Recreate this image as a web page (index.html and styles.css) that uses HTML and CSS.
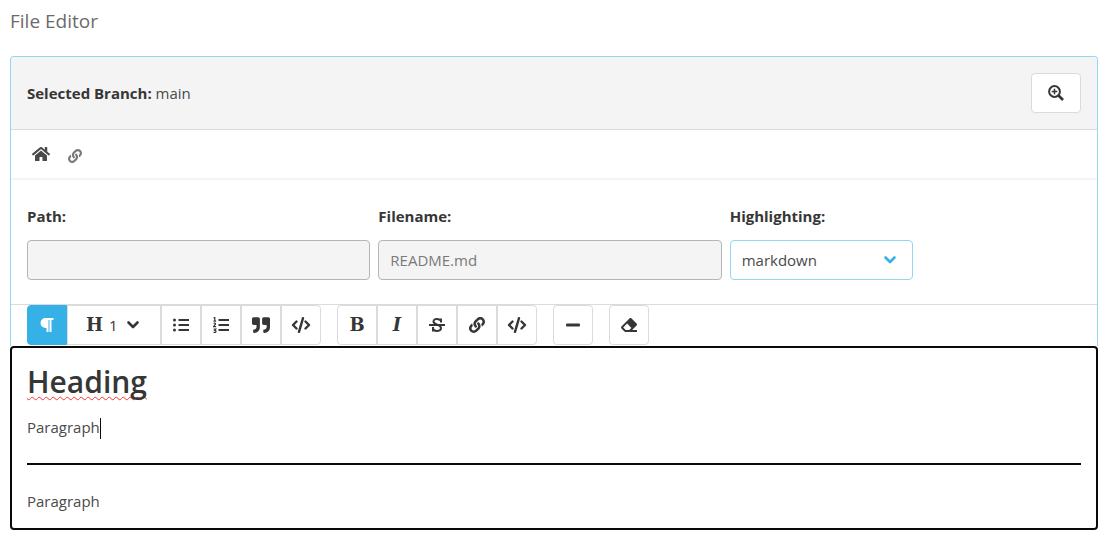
FILE: index.html
```html
<!DOCTYPE html>
<html lang="en">
<head>
<meta charset="utf-8">
<meta name="viewport" content="width=device-width, initial-scale=1">
<title>File Editor</title>
<link rel="stylesheet" href="styles.css">
</head>
<body>
<svg class="sprite" aria-hidden="true">
  <symbol id="link" viewBox="0 0 512 512"><path d="M326.612 185.391c59.747 59.809 58.927 155.698.36 214.59-.11.12-.24.25-.36.37l-67.2 67.2c-59.27 59.27-155.699 59.262-214.96 0-59.27-59.26-59.27-155.7 0-214.96l37.106-37.106c9.84-9.84 26.786-3.3 27.294 10.606.648 17.722 3.826 35.527 9.69 52.721 1.986 5.822.567 12.262-3.783 16.612l-13.087 13.087c-28.026 28.026-28.905 73.66-1.155 101.96 28.024 28.579 74.086 28.749 102.325.51l67.2-67.19c28.191-28.191 28.073-73.757 0-101.83-3.701-3.694-7.429-6.564-10.341-8.569a16.037 16.037 0 0 1-6.947-12.606c-.396-10.567 3.348-21.456 11.698-29.806l21.054-21.055c5.521-5.521 14.182-6.199 20.584-1.731a152.482 152.482 0 0 1 20.522 17.197zM467.547 44.449c-59.261-59.262-155.69-59.27-214.96 0l-67.2 67.2c-.12.12-.25.25-.36.37-58.566 58.892-59.387 154.781.36 214.59a152.454 152.454 0 0 0 20.521 17.196c6.402 4.468 15.064 3.789 20.584-1.731l21.054-21.055c8.35-8.35 12.094-19.239 11.698-29.806a16.037 16.037 0 0 0-6.947-12.606c-2.912-2.005-6.64-4.875-10.341-8.569-28.073-28.073-28.191-73.639 0-101.83l67.2-67.19c28.239-28.239 74.3-28.069 102.325.51 27.75 28.3 26.872 73.934-1.155 101.96l-13.087 13.087c-4.35 4.35-5.769 10.79-3.783 16.612 5.864 17.194 9.042 34.999 9.69 52.721.509 13.906 17.454 20.446 27.294 10.606l37.106-37.106c59.271-59.259 59.271-155.699.001-214.959z"/></symbol>
  <symbol id="code" viewBox="0 0 20 16"><path d="M5.500 4.500 2 8l3.500 3.500M14.500 4.500 18 8l-3.500 3.500M12 1.200 8 14.800" fill="none" stroke="currentColor" stroke-width="2.400" stroke-linecap="round" stroke-linejoin="round"/></symbol>
  <symbol id="chevron" viewBox="0 0 14 10"><path d="M2.5 2.5 7 7l4.500-4.500" fill="none" stroke="currentColor" stroke-width="2.600" stroke-linecap="round" stroke-linejoin="round"/></symbol>
</svg>
<main class="page">
  <h1 class="page-title">File Editor</h1>
  <section class="card">
    <header class="card-header">
      <p class="branch"><strong>Selected Branch:</strong> main</p>
      <button class="button button-zoom" type="button" aria-label="Zoom in">
        <svg class="icon" viewBox="0 0 16 16"><path d="M10 10l5 5" stroke="currentColor" stroke-width="2.600"/><circle cx="6.500" cy="6.500" r="5.400" fill="none" stroke="currentColor" stroke-width="2"/><path d="M6.500 3.700v5.600M3.700 6.500h5.600" stroke="currentColor" stroke-width="1.500"/></svg>
      </button>
    </header>
    <nav class="breadcrumb" aria-label="Breadcrumb">
      <a class="crumb" href="#" aria-label="Home"><svg class="icon icon-home" viewBox="0 0 576 512"><path d="M280.37 148.26L96 300.11V464a16 16 0 0 0 16 16l112.06-.29a16 16 0 0 0 15.92-16V368a16 16 0 0 1 16-16h64a16 16 0 0 1 16 16v95.64a16 16 0 0 0 16 16.05L464 480a16 16 0 0 0 16-16V300L295.67 148.26a12.19 12.19 0 0 0-15.3 0zM571.6 251.47L488 182.56V44.05a12 12 0 0 0-12-12h-56a12 12 0 0 0-12 12v72.61L318.47 43a48 48 0 0 0-61 0L4.34 251.47a12 12 0 0 0-1.6 16.9l25.5 31A12 12 0 0 0 45.15 301l235.22-193.74a12.19 12.19 0 0 1 15.3 0L530.9 301a12 12 0 0 0 16.9-1.6l25.5-31a12 12 0 0 0-1.7-16.93z"/></svg></a>
      <a class="crumb crumb-link" href="#" aria-label="Copy link"><svg class="icon icon-small"><use href="#link"/></svg></a>
    </nav>
    <form class="fields">
      <div class="field">
        <label class="label" for="path">Path:</label>
        <input class="input" id="path" type="text" readonly>
      </div>
      <div class="field">
        <label class="label" for="filename">Filename:</label>
        <input class="input" id="filename" type="text" value="README.md" readonly>
      </div>
      <div class="field">
        <label class="label" for="highlighting">Highlighting:</label>
        <div class="select-wrap">
          <select class="select" id="highlighting"><option>markdown</option></select>
          <svg class="select-arrow"><use href="#chevron"/></svg>
        </div>
      </div>
    </form>
    <div class="toolbar" role="toolbar" aria-label="Formatting">
      <div class="group">
        <button class="button active" type="button" aria-label="Paragraph"><svg class="icon" viewBox="0 0 512 512"><path d="M464 48v32a16 16 0 0 1-16 16h-48v368a16 16 0 0 1-16 16h-32a16 16 0 0 1-16-16V96h-32v368a16 16 0 0 1-16 16h-32a16 16 0 0 1-16-16V352h-32a160 160 0 0 1 0-320h240a16 16 0 0 1 16 16z"/></svg></button>
        <label class="button heading-picker">
          <span class="letter">H</span>
          <select class="heading-level" aria-label="Heading level"><option>1</option></select>
          <svg class="heading-arrow"><use href="#chevron"/></svg>
        </label>
        <button class="button" type="button" aria-label="Bulleted list"><svg class="icon" viewBox="0 0 16 16"><path d="M5.500 3H16M5.500 8H16M5.500 13H16" stroke="currentColor" stroke-width="2"/><circle cx="1.500" cy="3" r="1.500"/><circle cx="1.500" cy="8" r="1.500"/><circle cx="1.500" cy="13" r="1.500"/></svg></button>
        <button class="button" type="button" aria-label="Numbered list"><svg class="icon" viewBox="0 0 16 16"><path d="M5.500 3H16M5.500 8H16M5.500 13H16" stroke="currentColor" stroke-width="2"/><path d="M.6 1 1.800.4V4M.5 4.200h2.600M.6 6.500c.6-.8 2.100-.5 1.900.5C2.300 7.800.8 8.600.6 9.600h2.500M.6 12h2.200l-1.100 1.400c1.800-.1 1.600 2.200-.1 2.100l-1.100-.3" fill="none" stroke="currentColor" stroke-width="1.200"/></svg></button>
        <button class="button" type="button" aria-label="Quote"><svg class="icon icon-quote" viewBox="0 0 512 512"><path d="M464 32H336c-26.5 0-48 21.500-48 48v128c0 26.500 21.500 48 48 48h80v64c0 35.300-28.700 64-64 64h-8c-13.300 0-24 10.700-24 24v48c0 13.300 10.700 24 24 24h8c88.400 0 160-71.600 160-160V80c0-26.500-21.500-48-48-48zm-288 0H48C21.500 32 0 53.500 0 80v128c0 26.500 21.500 48 48 48h80v64c0 35.300-28.700 64-64 64h-8c-13.300 0-24 10.700-24 24v48c0 13.300 10.700 24 24 24h8c88.400 0 160-71.600 160-160V80c0-26.500-21.500-48-48-48z"/></svg></button>
        <button class="button" type="button" aria-label="Code block"><svg class="icon icon-wide"><use href="#code"/></svg></button>
      </div>
      <div class="group">
        <button class="button letter" type="button" aria-label="Bold">B</button>
        <button class="button letter italic" type="button" aria-label="Italic">I</button>
        <button class="button" type="button" aria-label="Strikethrough"><svg class="icon" viewBox="0 0 16 16"><path d="M0 8h16" stroke="currentColor" stroke-width="2"/><path d="M12 5.500V1.500M12 4C11 1.500 4.500.8 4.500 4.500c0 3.500 7.500 2.800 7.500 6.500 0 3.800-7 3.800-8 .8M4 10v4.500" fill="none" stroke="currentColor" stroke-width="2"/></svg></button>
        <button class="button" type="button" aria-label="Link"><svg class="icon"><use href="#link"/></svg></button>
        <button class="button" type="button" aria-label="Inline code"><svg class="icon icon-wide"><use href="#code"/></svg></button>
      </div>
      <div class="group">
        <button class="button" type="button" aria-label="Horizontal rule"><svg class="icon" viewBox="0 0 16 16"><rect x="1" y="6.500" width="14" height="3" rx="1"/></svg></button>
      </div>
      <div class="group">
        <button class="button" type="button" aria-label="Clear formatting"><svg class="icon" viewBox="0 0 512 512"><path d="M497.941 273.941c18.745-18.745 18.745-49.137 0-67.882l-160-160c-18.745-18.745-49.136-18.746-67.883 0l-256 256c-18.745 18.745-18.745 49.137 0 67.882l96 96A48.004 48.004 0 0 0 144 480h356c6.627 0 12-5.373 12-12v-40c0-6.627-5.373-12-12-12H355.883l142.058-142.059zm-302.627-62.627l137.373 137.373L265.373 416H150.628l-80-80 124.686-124.686z"/></svg></button>
      </div>
    </div>
  </section>
  <article class="editor" contenteditable="true" spellcheck="false">
    <h2 class="editor-heading">Heading</h2>
    <p class="editor-text">Paragraph<span class="caret"></span></p>
    <hr class="editor-rule">
    <p class="editor-text">Paragraph</p>
  </article>
</main>
</body>
</html>
```
FILE: styles.css
```css
*, *::before, *::after { box-sizing: border-box; }
body {
  margin: 0;
  background: #fff;
  color: #4a4a4a;
  font: 15px/24px "Open Sans", "Noto Sans", sans-serif;
}
h1, h2, p { margin: 0; }
input, select, button { font: inherit; color: inherit; }
.sprite { display: none; }
.page { padding: 8px 11px 16px 10px; }
.page-title {
  margin-bottom: 22px;
  color: #6b6b6b;
  font-size: 19px;
  font-weight: 400;
  line-height: 26px;
}
.card {
  border: 1px solid #93d7f3;
  border-bottom: 0;
  border-radius: 4px 4px 0 0;
}
.card-header {
  display: flex;
  align-items: center;
  justify-content: space-between;
  padding: 16px;
  border-bottom: 1px solid #dbdbdb;
  border-radius: 3px 3px 0 0;
  background: #f4f4f4;
}
strong, .label { color: #363636; font-weight: 700; }
.button {
  display: flex;
  align-items: center;
  justify-content: center;
  width: 40px;
  height: 40px;
  padding: 0;
  border: 1px solid #dbdbdb;
  border-radius: 4px;
  background: #fff;
  color: #363636;
}
.button-zoom { width: 50px; }
.icon { width: 16px; height: 16px; fill: currentColor; }
.icon-home, .icon-quote { width: 18px; }
.icon-quote { height: 18px; }
.icon-wide { width: 20px; }
.icon-small { width: 14px; height: 14px; }
.breadcrumb {
  display: flex;
  align-items: center;
  gap: 18px;
  height: 50px;
  padding: 0 21px;
  border-bottom: 2px solid #f4f4f4;
}
.crumb { display: flex; color: #4a4a4a; }
.crumb-link { padding-top: 4px; color: #7a7a7a; }
.fields {
  display: grid;
  grid-template-columns: repeat(3, 1fr);
  padding: 24px 16px;
  border-bottom: 1px solid #dbdbdb;
}
.field { padding-right: 8px; }
.label { display: block; margin-bottom: 12px; }
.input, .select {
  display: block;
  height: 40px;
  padding: 0 11px;
  border: 1px solid #b5b5b5;
  border-radius: 4px;
}
.input { width: 100%; background: #f4f4f4; color: #7a7a7a; }
.select-wrap { position: relative; width: 183px; }
.select {
  width: 100%;
  border-color: #93d7f3;
  background: #fff;
  appearance: none;
}
.select-arrow {
  position: absolute;
  top: 15px;
  right: 16px;
  width: 14px;
  height: 10px;
  color: #35b1e8;
  pointer-events: none;
}
.toolbar { display: flex; gap: 16px; padding: 0 16px 1px; }
.group { display: flex; }
.group .button:not(:first-child) { border-top-left-radius: 0; border-bottom-left-radius: 0; }
.group .button:not(:last-child) { border-top-right-radius: 0; border-bottom-right-radius: 0; }
.group .active { border-color: #35b1e8; background: #35b1e8; color: #fff; }
.letter { font: bold 18px/24px "DejaVu Serif", serif; }
.italic { font-style: italic; }
.heading-picker { position: relative; justify-content: flex-start; width: 94px; padding: 0 18px; }
.heading-level {
  width: 48px;
  margin-right: -16px;
  padding: 0 0 0 6px;
  border: 0;
  background: transparent;
  appearance: none;
}
.heading-arrow {
  position: absolute;
  top: 14px;
  right: 20px;
  width: 14px;
  height: 10px;
  pointer-events: none;
}
.editor {
  padding: 13px 15px 15px;
  border: 2px solid #0a0a0a;
  border-radius: 4px;
  outline: 0;
}
.editor-heading {
  margin-bottom: 12px;
  color: #363636;
  font-size: 30px;
  font-weight: 600;
  line-height: 42px;
  text-decoration: underline wavy #f33 1px;
  text-decoration-skip-ink: none;
  text-underline-offset: 3px;
}
.caret { display: inline-block; height: 21px; border-left: 1px solid #0a0a0a; vertical-align: middle; }
.editor-rule { height: 2px; margin: 24px 0; border: 0; background: #0a0a0a; }
```
